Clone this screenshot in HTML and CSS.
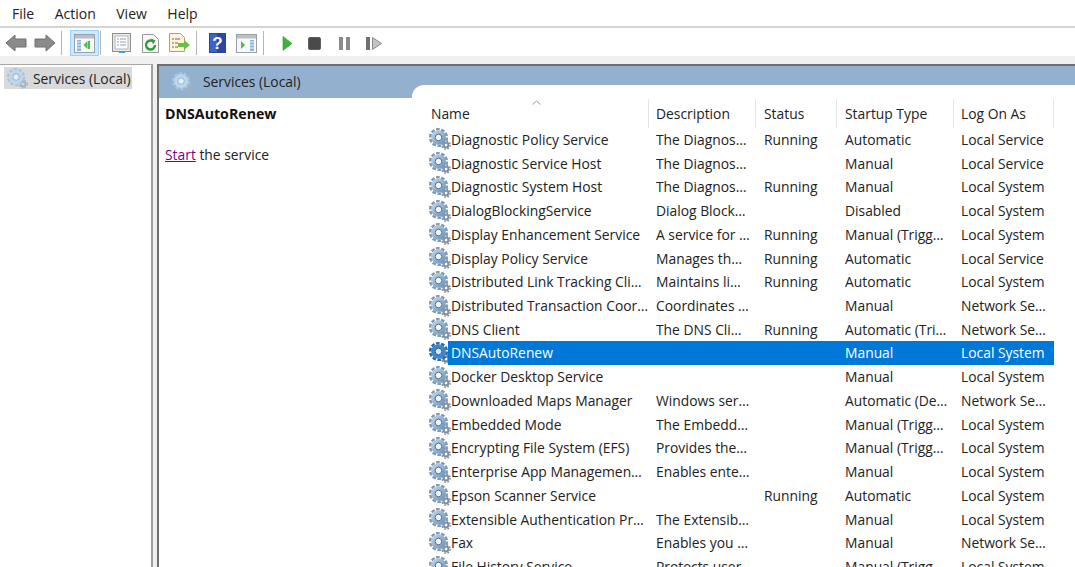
FILE: index.html
```html
<!DOCTYPE html>
<html lang="en">
	<head>
		<meta charset="utf-8">
		<title>Services</title>
		<link rel="stylesheet" href="styles.css">
	</head>
	<body>
		<svg class="defs" width="0" height="0">
			<defs>
				<linearGradient id="steel" x1="0" y1="0" x2="1" y2="1">
					<stop offset="0" stop-color="#b7d0e8"/>
					<stop offset="1" stop-color="#6d98c2"/>
				</linearGradient>
				<symbol id="gear" viewBox="0 0 22 22">
					<circle cx="17" cy="17" r="2.4" fill="#fff" stroke="#7f8e9c" stroke-width="2"/>
					<circle cx="17" cy="17" r="4.2" fill="none" stroke="#7f8e9c" stroke-width="1.4" stroke-dasharray="1.7 1.6"/>
					<circle cx="9.5" cy="9.5" r="8.3" fill="none" stroke="#8299b0" stroke-width="2.6" stroke-dasharray="3.6 1.6"/>
					<circle cx="9.5" cy="9.5" r="5.4" fill="#fff" stroke="url(#steel)" stroke-width="3.8"/>
					<circle cx="9.5" cy="9.5" r="3.3" fill="#f2f7fb" stroke="#4f6b86" stroke-width="1"/>
				</symbol>
				<symbol id="gear-sel" viewBox="0 0 22 22">
					<circle cx="17" cy="17" r="2.4" fill="#fff" stroke="#6d8199" stroke-width="2"/>
					<circle cx="17" cy="17" r="4.2" fill="none" stroke="#6d8199" stroke-width="1.4" stroke-dasharray="1.7 1.6"/>
					<circle cx="9.5" cy="9.5" r="8.3" fill="none" stroke="#2a6aa8" stroke-width="2.6" stroke-dasharray="3.6 1.6"/>
					<circle cx="9.5" cy="9.5" r="5.4" fill="#fff" stroke="#3a87d0" stroke-width="3.8"/>
					<circle cx="9.5" cy="9.5" r="3.3" fill="#dcebf8" stroke="#1b5c9e" stroke-width="1"/>
				</symbol>
				<symbol id="gear-pale" viewBox="0 0 22 22">
					<circle cx="17" cy="17" r="2.4" fill="none" stroke="#9fb0c0" stroke-width="1.8"/>
					<circle cx="17" cy="17" r="4.1" fill="none" stroke="#9fb0c0" stroke-width="1.3" stroke-dasharray="1.7 1.6"/>
					<circle cx="9.5" cy="9.5" r="8.3" fill="none" stroke="#a9c4dc" stroke-width="2.4" stroke-dasharray="3.6 1.6"/>
					<circle cx="9.5" cy="9.5" r="5.4" fill="#eef5fb" stroke="#bcd6ec" stroke-width="3.8"/>
					<circle cx="9.5" cy="9.5" r="3.4" fill="#e4eef7" stroke="#7f9fbd" stroke-width=".8"/>
				</symbol>
			</defs>
		</svg>

		<nav class="menubar">
			<span>File</span>
			<span>Action</span>
			<span>View</span>
			<span>Help</span>
		</nav>

		<div class="toolbar">
			<span class="tool">
				<svg width="22" height="20" viewBox="0 0 22 20"><path d="M1 10 10 2v4h11v8H10v4z" fill="#8b8b8b" stroke="#6e6e6e"/></svg>
			</span>
			<span class="tool">
				<svg width="22" height="20" viewBox="0 0 22 20"><path d="M21 10 12 2v4H1v8h11v4z" fill="#8b8b8b" stroke="#6e6e6e"/></svg>
			</span>
			<span class="sep"></span>
			<span class="tool on">
				<svg width="21" height="19" viewBox="0 0 21 19"><rect x=".5" y=".5" width="20" height="18" fill="#f6f8fa" stroke="#99a1a8"/><rect x="1" y="1" width="19" height="3.5" fill="#b9c0c6"/><rect x="3" y="6" width="4" height="11" fill="#8fb4d8"/><path d="M3 8h4M3 11h4M3 14h4" stroke="#e8f0f8"/><rect x="14" y="7" width="2" height="8" fill="#4fb84f"/><path d="M13.5 7v8l-4-4z" fill="#4fb84f"/></svg>
			</span>
			<span class="sep"></span>
			<span class="tool">
				<svg width="20" height="21" viewBox="0 0 20 21"><rect x=".5" y=".5" width="18" height="18" fill="#e9e9e9" stroke="#8d8d8d"/><rect x="3" y="3" width="13" height="13" fill="#fff" stroke="#b5b5b5"/><path d="M5 6h2M8 6h6M5 9h2M8 9h6M5 12h2M8 12h6" stroke="#8a9fb5"/><rect x="7" y="18" width="6" height="2" fill="#39a0e8"/></svg>
			</span>
			<span class="tool">
				<svg width="17" height="19" viewBox="0 0 17 19"><path d="M.5.5h11l5 5v13H.5z" fill="#f6f6f6" stroke="#9a9a9a"/><path d="M13 11a4.5 4.5 0 1 1-2-3.700" fill="none" stroke="#2f9e38" stroke-width="2.4"/><path d="M9 4.500l4.500 2-2.500 4z" fill="#2f9e38"/></svg>
			</span>
			<span class="tool">
				<svg width="21" height="20" viewBox="0 0 21 20"><path d="M.5.5h11l4 4v14H.5z" fill="#fbf4d9" stroke="#a5a08a"/><path d="M3 6h2M6 6h5M3 10h2M6 10h3M3 14h2M6 14h3" stroke="#6a6a5c"/><path d="M9 10h6V7l6 5-6 5v-3H9z" fill="#6cc04a"/></svg>
			</span>
			<span class="sep"></span>
			<span class="tool">
				<svg width="17" height="20" viewBox="0 0 17 20"><rect width="17" height="20" fill="#2746a8"/><rect x="1" y="1" width="7" height="18" fill="#3d62c9"/><text x="8.5" y="16" class="help-mark">?</text></svg>
			</span>
			<span class="tool">
				<svg width="21" height="19" viewBox="0 0 21 19"><rect x=".5" y=".5" width="20" height="18" fill="#f6f8fa" stroke="#99a1a8"/><rect x="1" y="1" width="19" height="3.5" fill="#b9c0c6"/><path d="M5 7v8l4-4z" fill="#4fb84f"/><rect x="14" y="6" width="4" height="11" fill="#8fb4d8"/><path d="M14 8h4M14 11h4M14 14h4" stroke="#e8f0f8"/></svg>
			</span>
			<span class="sep sep-wide"></span>
			<span class="tool">
				<svg width="13" height="15" viewBox="0 0 13 15"><path d="M3 .5v14l9-7z" fill="#3cb43c" stroke="#2b9a2b" stroke-width=".6"/></svg>
			</span>
			<span class="tool">
				<svg class="shift" width="13" height="13" viewBox="0 0 13 13"><rect x=".5" y=".5" width="12" height="12" rx="1.5" fill="#4a4a4a" stroke="#5f5f5f"/></svg>
			</span>
			<span class="tool">
				<svg width="11" height="13" viewBox="0 0 11 13"><rect width="4" height="13" fill="#8a8a8a"/><rect x="7" width="4" height="13" fill="#8a8a8a"/></svg>
			</span>
			<span class="tool">
				<svg width="16" height="13" viewBox="0 0 16 13"><rect width="4" height="13" fill="#6f6f6f"/><path d="M6.5.5v12l9-6z" fill="#c4c4c4" stroke="#8a8a8a"/></svg>
			</span>
		</div>

		<div class="panes">
			<aside class="tree">
				<div class="tree-item">
					<svg class="gear" width="21" height="21"><use href="#gear-pale"/></svg>
					<span>Services (Local)</span>
				</div>
			</aside>

			<main class="console">
				<div class="band">
					<svg class="gear" width="21" height="21"><use href="#gear-pale"/></svg>
					<span>Services (Local)</span>
				</div>
				<div class="split">
					<section class="detail">
						<h2>DNSAutoRenew</h2>
						<p><a href="#start">Start</a> the service</p>
					</section>

					<section class="list">
						<div class="row head">
							<span class="name-head">Name<svg class="sort" width="9" height="5" viewBox="0 0 9 5"><path d="M.5 4.500l4-3.500 4 3.500" fill="none" stroke="#9a9a9a"/></svg></span>
							<span>Description</span>
							<span>Status</span>
							<span>Startup Type</span>
							<span>Log On As</span>
						</div>
						<div class="row"><svg width="22" height="22"><use href="#gear"/></svg><span>Diagnostic Policy Service</span><span>The Diagnos…</span><span>Running</span><span>Automatic</span><span>Local Service</span></div>
						<div class="row"><svg width="22" height="22"><use href="#gear"/></svg><span>Diagnostic Service Host</span><span>The Diagnos…</span><span></span><span>Manual</span><span>Local Service</span></div>
						<div class="row"><svg width="22" height="22"><use href="#gear"/></svg><span>Diagnostic System Host</span><span>The Diagnos…</span><span>Running</span><span>Manual</span><span>Local System</span></div>
						<div class="row"><svg width="22" height="22"><use href="#gear"/></svg><span>DialogBlockingService</span><span>Dialog Block…</span><span></span><span>Disabled</span><span>Local System</span></div>
						<div class="row"><svg width="22" height="22"><use href="#gear"/></svg><span>Display Enhancement Service</span><span>A service for …</span><span>Running</span><span>Manual (Trigg…</span><span>Local System</span></div>
						<div class="row"><svg width="22" height="22"><use href="#gear"/></svg><span>Display Policy Service</span><span>Manages th…</span><span>Running</span><span>Automatic</span><span>Local Service</span></div>
						<div class="row"><svg width="22" height="22"><use href="#gear"/></svg><span>Distributed Link Tracking Cli…</span><span>Maintains li…</span><span>Running</span><span>Automatic</span><span>Local System</span></div>
						<div class="row"><svg width="22" height="22"><use href="#gear"/></svg><span>Distributed Transaction Coor…</span><span>Coordinates …</span><span></span><span>Manual</span><span>Network Se…</span></div>
						<div class="row"><svg width="22" height="22"><use href="#gear"/></svg><span>DNS Client</span><span>The DNS Cli…</span><span>Running</span><span>Automatic (Tri…</span><span>Network Se…</span></div>
						<div class="row selected"><svg width="22" height="22"><use href="#gear-sel"/></svg><span>DNSAutoRenew</span><span></span><span></span><span>Manual</span><span>Local System</span></div>
						<div class="row"><svg width="22" height="22"><use href="#gear"/></svg><span>Docker Desktop Service</span><span></span><span></span><span>Manual</span><span>Local System</span></div>
						<div class="row"><svg width="22" height="22"><use href="#gear"/></svg><span>Downloaded Maps Manager</span><span>Windows ser…</span><span></span><span>Automatic (De…</span><span>Network Se…</span></div>
						<div class="row"><svg width="22" height="22"><use href="#gear"/></svg><span>Embedded Mode</span><span>The Embedd…</span><span></span><span>Manual (Trigg…</span><span>Local System</span></div>
						<div class="row"><svg width="22" height="22"><use href="#gear"/></svg><span>Encrypting File System (EFS)</span><span>Provides the…</span><span></span><span>Manual (Trigg…</span><span>Local System</span></div>
						<div class="row"><svg width="22" height="22"><use href="#gear"/></svg><span>Enterprise App Managemen…</span><span>Enables ente…</span><span></span><span>Manual</span><span>Local System</span></div>
						<div class="row"><svg width="22" height="22"><use href="#gear"/></svg><span>Epson Scanner Service</span><span></span><span>Running</span><span>Automatic</span><span>Local System</span></div>
						<div class="row"><svg width="22" height="22"><use href="#gear"/></svg><span>Extensible Authentication Pr…</span><span>The Extensib…</span><span></span><span>Manual</span><span>Local System</span></div>
						<div class="row"><svg width="22" height="22"><use href="#gear"/></svg><span>Fax</span><span>Enables you …</span><span></span><span>Manual</span><span>Network Se…</span></div>
						<div class="row"><svg width="22" height="22"><use href="#gear"/></svg><span>File History Service</span><span>Protects user…</span><span></span><span>Manual (Trigg…</span><span>Local System</span></div>
					</section>
				</div>
			</main>
		</div>
	</body>
</html>
```

FILE: styles.css
```css
* {
	margin: 0;
	padding: 0;
	box-sizing: border-box;
}

html, body {
	height: 100%;
	overflow: hidden;
}

body {
	display: flex;
	flex-direction: column;
	background-color: #f0f0f0;
	color: #222;
	font-family: "Open Sans", "Noto Sans", sans-serif;
	font-size: 13.85px;
}

.defs {
	position: absolute;
}

.menubar {
	display: flex;
	flex: none;
	gap: 20.5px;
	align-items: center;
	height: 28px;
	padding-left: 12px;
	background-color: #fff;
	border-bottom: 2px solid #d4d4d4;
	font-size: 14px;
}

.toolbar {
	display: flex;
	flex: none;
	align-items: center;
	height: 28px;
	padding: 2px 0 0 1px;
	background-color: #fff;
}

.tool {
	display: flex;
	align-items: center;
	justify-content: center;
	width: 29px;
	height: 26px;
}

.tool.on {
	margin: 0 -1px 0 2px;
	background-color: #cce8ff;
	border: 1px solid #99d1ff;
}

.shift {
	margin-right: 3px;
}

.sep {
	width: 1px;
	height: 24px;
	margin: 0 6px 0 2px;
	background-color: #b5b5b5;
}

.sep-wide {
	margin-right: 8px;
}

.help-mark {
	fill: #fff;
	font-family: "Liberation Sans", sans-serif;
	font-size: 17px;
	font-weight: bold;
	text-anchor: middle;
}

.panes {
	display: flex;
	flex: 1;
	gap: 4px;
	min-height: 0;
	padding-top: 8px;
}

.tree {
	flex: none;
	width: 153px;
	padding: 2px 0 0 4px;
	background-color: #fff;
	border-top: 1px solid #a8a8a8;
	border-right: 2px solid #a0a0a0;
}

.tree-item {
	display: flex;
	gap: 5px;
	align-items: center;
	width: 128px;
	height: 22px;
	padding-left: 3px;
	background-color: #d9d9d9;
}

.console {
	flex: 1;
	min-width: 0;
	background-color: #fff;
	border-top: 2px solid #6d6d6d;
	border-left: 2px solid #6d6d6d;
}

.band {
	display: flex;
	gap: 10px;
	align-items: center;
	height: 32px;
	padding-left: 13px;
	background-color: #94b0cf;
}

.band span {
	padding-bottom: 1px;
}

.split {
	display: flex;
}

.detail {
	flex: none;
	width: 253px;
	padding: 6px 0 0 6px;
}

.detail h2 {
	font-size: 14.2px;
	font-weight: bold;
	color: #111;
}

.detail p {
	margin-top: 22px;
}

.detail a {
	color: #800080;
}

.list {
	flex: 1;
	min-width: 0;
	margin-top: -13px;
	padding-top: 13px;
	background-color: #fff;
	border-top-left-radius: 12px;
}

.row {
	display: grid;
	grid-template-columns: 36px 201px 107px 81px 117px 100px;
	align-items: center;
	height: 23.74px;
	white-space: nowrap;
}

.row svg {
	margin-left: 17px;
}

.row span {
	display: flex;
	align-items: center;
	height: 100%;
	padding-left: 8px;
	overflow: hidden;
}

.row span:nth-of-type(1) {
	padding-left: 3px;
}

.row span:nth-of-type(2), .row span:nth-of-type(5) {
	padding-left: 7px;
}

.selected span {
	background-color: #0078d7;
	color: #fff;
}

.head {
	grid-template-columns: 237px 107px 81px 117px 100px;
	height: 29.5px;
	padding-top: 1px;
}

.head span {
	border-right: 1px solid #e5e5e5;
}

.head span:nth-of-type(1).name-head {
	position: relative;
	padding-left: 19px;
}

.head span:nth-of-type(4) {
	padding-left: 8px;
}

.row .sort {
	position: absolute;
	top: 1px;
	left: 120px;
	margin: 0;
}
```
